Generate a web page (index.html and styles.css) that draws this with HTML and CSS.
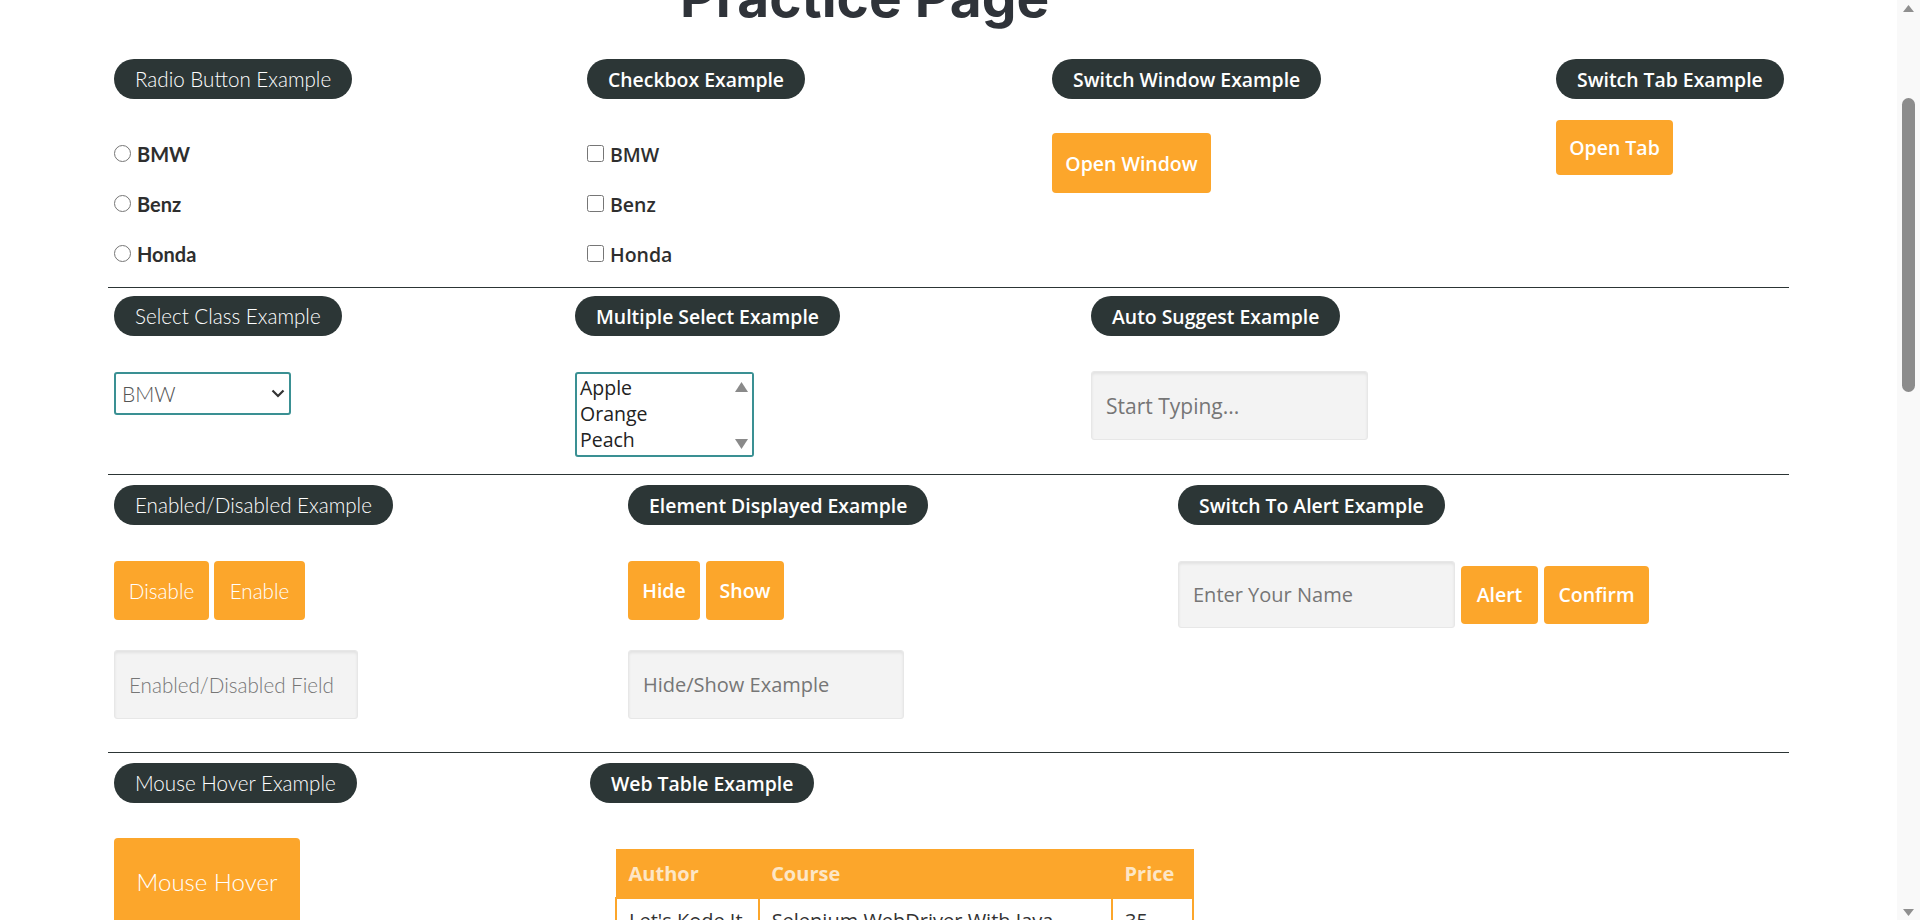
FILE: index.html
```html
<!DOCTYPE html>
<html lang="en">
<head>
<meta charset="utf-8">
<title>Practice Page</title>
<link rel="stylesheet" href="styles.css">
</head>
<body>
<div class="viewport">
  <main class="page">
    <h1 class="title">Practice Page</h1>
    <div class="container">
      <section class="row row-1">
        <div class="block radio-block">
          <span class="legend light">Radio Button Example</span>
          <div class="options">
            <label class="opt radio-opt"><input type="radio" name="cars" class="radio">BMW</label>
            <label class="opt radio-opt"><input type="radio" name="cars" class="radio">Benz</label>
            <label class="opt radio-opt"><input type="radio" name="cars" class="radio">Honda</label>
          </div>
        </div>
        <div class="block check-block">
          <span class="legend tre">Checkbox Example</span>
          <div class="options">
            <label class="opt check-opt"><input type="checkbox" class="check">BMW</label>
            <label class="opt check-opt"><input type="checkbox" class="check">Benz</label>
            <label class="opt check-opt"><input type="checkbox" class="check">Honda</label>
          </div>
        </div>
        <div class="block window-block">
          <span class="legend tre">Switch Window Example</span>
          <button class="btn tre btn-window">Open Window</button>
        </div>
        <div class="block tab-block">
          <span class="legend tre">Switch Tab Example</span>
          <button class="btn tre btn-tab">Open Tab</button>
        </div>
      </section>
      <hr class="sep">
      <section class="row row-2">
        <div class="block select-block">
          <span class="legend light">Select Class Example</span>
          <div class="select-box">
            <span class="select-value">BMW</span>
            <svg class="chevron" width="14" height="9" viewBox="0 0 14 9"><path d="M1.5 1.5 L7 7 L12.5 1.5" fill="none" stroke="#333" stroke-width="2.2"/></svg>
          </div>
        </div>
        <div class="block multi-block">
          <span class="legend tre">Multiple Select Example</span>
          <div class="listbox" role="listbox">
            <div class="list-items">
              <div class="list-item">Apple</div>
              <div class="list-item">Orange</div>
              <div class="list-item">Peach</div>
            </div>
            <div class="list-scroll">
              <svg width="13" height="10" viewBox="0 0 13 10"><polygon points="6.5,0 13,10 0,10" fill="#8a8a8a"/></svg>
              <svg width="13" height="10" viewBox="0 0 13 10"><polygon points="0,0 13,0 6.5,10" fill="#8a8a8a"/></svg>
            </div>
          </div>
        </div>
        <div class="block auto-block">
          <span class="legend tre">Auto Suggest Example</span>
          <input class="field tre field-auto" placeholder="Start Typing...">
        </div>
      </section>
      <hr class="sep">
      <section class="row row-3">
        <div class="block enable-block">
          <span class="legend light">Enabled/Disabled Example</span>
          <div class="btn-group">
            <button class="btn light btn-tall btn-disable">Disable</button>
            <button class="btn light btn-tall btn-enable">Enable</button>
          </div>
          <input class="field light field-enabled" placeholder="Enabled/Disabled Field">
        </div>
        <div class="block display-block">
          <span class="legend tre">Element Displayed Example</span>
          <div class="btn-group btn-group-wide">
            <button class="btn tre btn-tall btn-hide">Hide</button>
            <button class="btn tre btn-tall btn-show">Show</button>
          </div>
          <input class="field tre field-hide" placeholder="Hide/Show Example">
        </div>
        <div class="block alert-block">
          <span class="legend tre">Switch To Alert Example</span>
          <div class="alert-row">
            <input class="field tre field-name" placeholder="Enter Your Name">
            <button class="btn tre btn-alert btn-alert-ok">Alert</button>
            <button class="btn tre btn-alert btn-confirm">Confirm</button>
          </div>
        </div>
      </section>
      <hr class="sep">
      <section class="row row-4">
        <div class="block hover-block">
          <span class="legend light">Mouse Hover Example</span>
          <button class="btn light btn-hover">Mouse Hover</button>
        </div>
        <div class="block table-block">
          <span class="legend tre">Web Table Example</span>
          <table class="web-table">
            <thead>
              <tr><th class="col-author">Author</th><th class="col-course">Course</th><th class="col-price">Price</th></tr>
            </thead>
            <tbody>
              <tr><td>Let's Kode It</td><td>Selenium WebDriver With Java</td><td>35</td></tr>
              <tr><td>Let's Kode It</td><td>Python Programming Language</td><td>30</td></tr>
            </tbody>
          </table>
        </div>
      </section>
    </div>
  </main>
  <div class="scrollbar">
    <svg class="sb-arrow" width="11" height="7" viewBox="0 0 11 7"><polygon points="5.5,0 11,7 0,7" fill="#8f8f8f"/></svg>
    <div class="sb-thumb"></div>
    <svg class="sb-arrow sb-down" width="11" height="7" viewBox="0 0 11 7"><polygon points="0,0 11,0 5.5,7" fill="#8f8f8f"/></svg>
  </div>
</div>
</body>
</html>
```

FILE: styles.css
```css
* { box-sizing: border-box; }

html, body {
  margin: 0;
  height: 920px;
  overflow: hidden;
  background: #ffffff;
}

body {
  font-family: Lato, "Open Sans", sans-serif;
  color: #333333;
}

.viewport {
  display: flex;
  height: 920px;
}

.page {
  flex: 1;
  min-width: 0;
  overflow: hidden;
}

.title {
  margin: -35px 0 0;
  padding-left: 680px;
  font-family: Inter, "Noto Sans", sans-serif;
  font-weight: 700;
  font-size: 55px;
  line-height: 64px;
  color: #2f3339;
  white-space: nowrap;
}

.container {
  width: 1681px;
  margin: 0 auto;
}

.row {
  display: flex;
  align-items: flex-start;
}

.row-1 { padding: 30px 0 8px; }
.row-2 { padding: 8px 0 17px; }
.row-3 { padding: 10px 0 33px; }
.row-4 { padding: 10px 0 0; }

.sep {
  border: 0;
  height: 1px;
  background: #2c3535;
  margin: 0;
}

.block {
  flex: none;
  padding-left: 6px;
  display: flex;
  flex-direction: column;
  align-items: flex-start;
}

.radio-block { width: 473px; }
.check-block { width: 465px; }
.window-block { width: 504px; }
.tab-block { width: 239px; }
.select-block { width: 461px; }
.multi-block { width: 516px; }
.auto-block { width: 400px; }
.enable-block { width: 514px; }
.display-block { width: 550px; }
.alert-block { width: 560px; }
.hover-block { width: 476px; }
.table-block { width: 700px; }

.light {
  font-family: Lato, sans-serif;
  font-weight: 300;
}

.tre {
  font-family: "Open Sans", "Noto Sans", sans-serif;
  font-weight: 600;
}

.legend {
  height: 40px;
  display: inline-flex;
  align-items: center;
  padding: 0 21px;
  border-radius: 20px;
  background: #2c3636;
  color: #ffffff;
  font-size: 20.6px;
  white-space: nowrap;
}

.legend.tre { font-size: 19.4px; }

/* radio / checkbox */
.options {
  margin-top: 30px;
  display: flex;
  flex-direction: column;
}

.opt {
  height: 50px;
  display: flex;
  align-items: center;
  font-size: 20px;
  color: #2e2e2e;
}

.radio-opt {
  font-family: Lato, sans-serif;
  font-weight: 700;
}

.check-opt {
  font-family: "Open Sans", sans-serif;
  font-weight: 600;
  font-size: 19.5px;
}

.radio,
.check {
  width: 17px;
  height: 17px;
  margin: 0 6px 0 0;
  position: relative;
  top: -1px;
}

/* buttons */
.btn {
  border: 0;
  border-radius: 4px;
  background: #fca62b;
  color: #ffffff;
  font-size: 19.5px;
  padding: 0;
  text-align: center;
  white-space: nowrap;
}

.btn.light { font-size: 20.6px; }

.btn-window {
  margin-top: 34px;
  width: 159px;
  height: 60px;
}

.btn-tab {
  margin-top: 21px;
  width: 117px;
  height: 55px;
}

.btn-group {
  margin-top: 36px;
  display: flex;
  gap: 5px;
}

.btn-group-wide { gap: 6px; }

.btn-tall { height: 59px; }

.btn-disable { width: 95px; }
.btn-enable { width: 91px; }
.btn-hide { width: 72px; }
.btn-show { width: 78px; }

.btn-alert {
  height: 58px;
  margin-left: 6px;
}

.btn-alert-ok { width: 77px; }
.btn-confirm { width: 105px; }

.btn.btn-hover {
  margin-top: 35px;
  width: 186px;
  height: 86px;
  font-size: 24px;
}

/* fields */
.field {
  height: 69px;
  border: 1px solid #e7e7e7;
  border-radius: 3px;
  background: #f3f3f3;
  box-shadow: inset 0 2px 3px rgba(0, 0, 0, 0.07);
  padding: 0 14px;
  font-size: 20px;
  font-weight: 400;
  color: #555555;
  outline: none;
}

.field::placeholder { color: #767676; }

.field.light {
  font-size: 20.6px;
  font-weight: 300;
}

.field-auto {
  margin-top: 35px;
  width: 277px;
  font-size: 21px;
}

.field-enabled {
  margin-top: 30px;
  width: 244px;
}

.field-hide {
  margin-top: 30px;
  width: 276px;
}

.alert-row {
  margin-top: 36px;
  display: flex;
  align-items: center;
}

.field-name {
  width: 277px;
  height: 67px;
}

/* select */
.select-box {
  margin-top: 36px;
  width: 177px;
  height: 43px;
  border: 2px solid #3a9093;
  border-radius: 3px;
  display: flex;
  align-items: center;
  justify-content: space-between;
  padding: 0 4px 0 6px;
  background: #ffffff;
}

.select-value {
  font-family: Lato, sans-serif;
  font-weight: 300;
  font-size: 21px;
  color: #555555;
}

.listbox {
  margin-top: 36px;
  width: 179px;
  height: 85px;
  border: 2px solid #3a9093;
  border-radius: 3px;
  display: flex;
  justify-content: space-between;
  background: #ffffff;
}

.list-items {
  padding: 1px 0 0 3px;
  font-family: "Open Sans", sans-serif;
  font-weight: 500;
  font-size: 19.5px;
  line-height: 26px;
  color: #222222;
}

.list-scroll {
  width: 20px;
  display: flex;
  flex-direction: column;
  justify-content: space-between;
  align-items: center;
  padding: 8px 2px 6px 0;
  background: #ffffff;
}

/* table */
.web-table {
  margin: 46px 0 0 25px;
  width: 579px;
  border-collapse: collapse;
  font-family: "Open Sans", sans-serif;
}

.web-table th {
  background: #fca62b;
  color: #fde6c6;
  font-weight: 700;
  font-size: 20px;
  height: 48px;
  text-align: left;
  padding: 0 12px;
  border: 1px solid #fca62b;
}

.col-author { width: 143px; }
.col-course { width: 355px; }
.col-price { width: 81px; }

.web-table td {
  border: 2px solid #fca62b;
  padding: 8px 12px;
  font-size: 20px;
  color: #333333;
}

/* fake window scrollbar */
.scrollbar {
  flex: none;
  width: 23px;
  height: 920px;
  background: #f9f9f9;
  display: flex;
  flex-direction: column;
  align-items: center;
}

.sb-arrow {
  margin-top: 5px;
}

.sb-thumb {
  margin-top: 86px;
  width: 13px;
  height: 294px;
  border-radius: 7px;
  background: #8c8c8c;
}

.sb-down {
  margin-top: auto;
  margin-bottom: 4px;
}
```
